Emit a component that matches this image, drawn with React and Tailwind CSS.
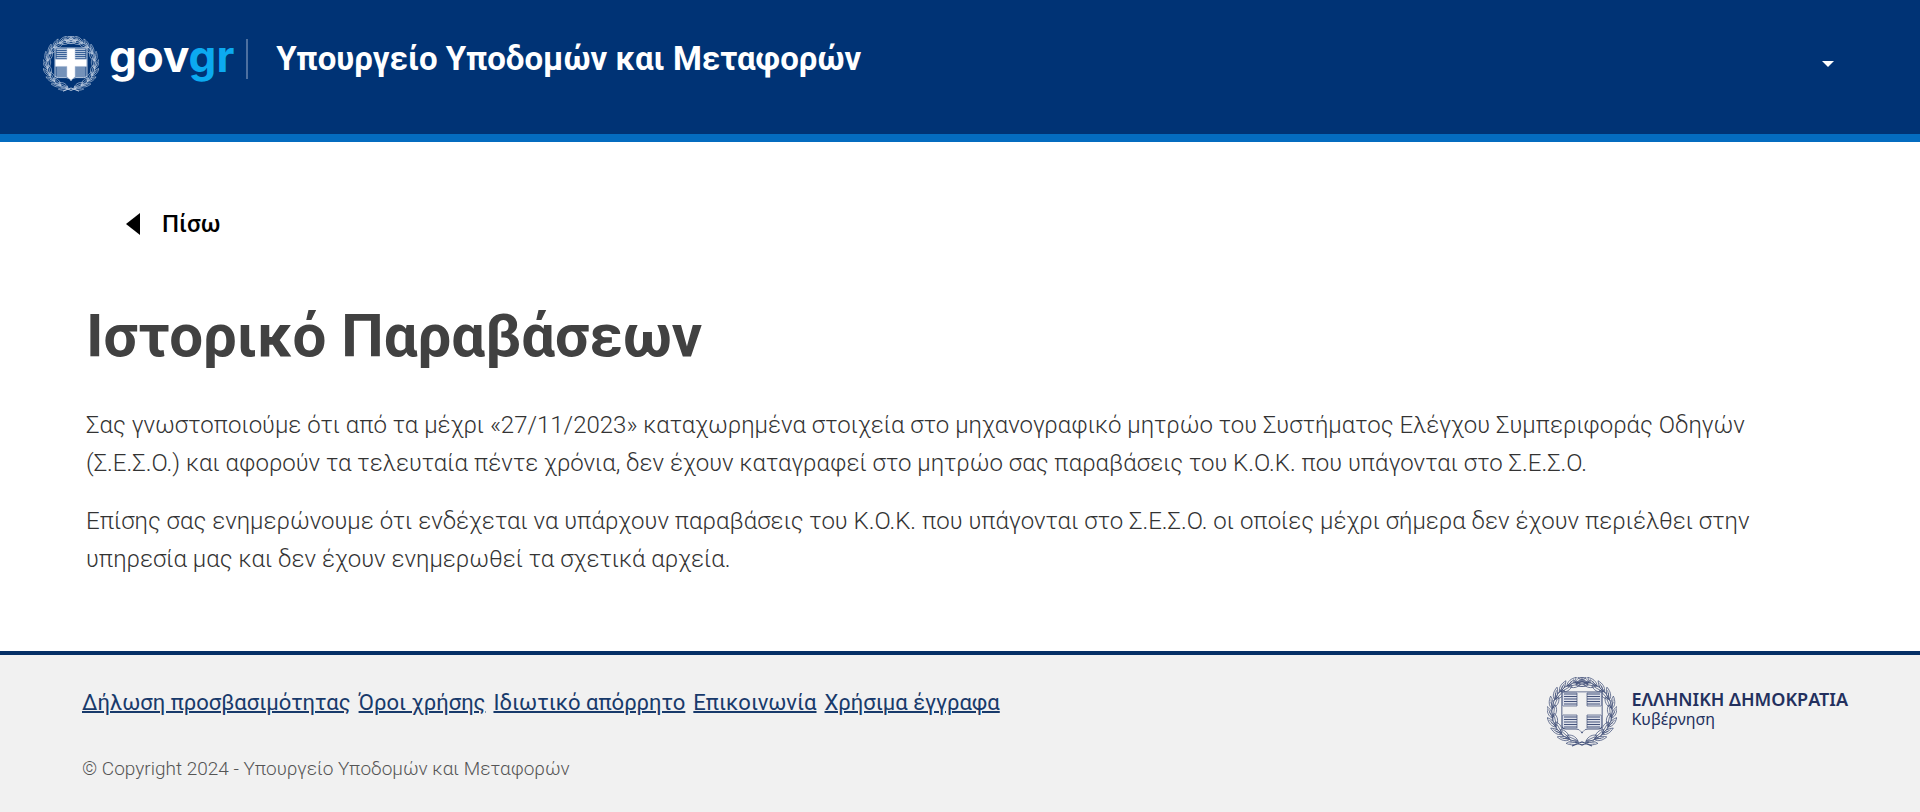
import React from "react";

const footerLinks = [
  "Δήλωση προσβασιμότητας",
  "Όροι χρήσης",
  "Ιδιωτικό απόρρητο",
  "Επικοινωνία",
  "Χρήσιμα έγγραφα",
];

const leafAngles = [12, 30, 48, 66, 84, 102, 120, 138, 156, 172];
const stripes = [17, 19.5, 22, 24.5, 27, 40, 42.5, 45, 47.5, 50];

// One half of the laurel wreath, from the bottom knot up to the top
const Branch = () => (
  <g>
    {leafAngles.map((angle) => (
      <g key={angle} transform={`rotate(${angle} 35 35)`}>
        <path d="M38 65 C34 64 30 65 26 69 C31 70 36 69 38 65Z" />
        <path d="M38 65 L29 68" />
        <path d="M37 64 C34 60 29 59 25 61 C28 65 33 66 37 64Z" />
        <path d="M37 64 L28 62" />
        <path d="M31 66 C28 63 26 64 22 65" />
      </g>
    ))}
  </g>
);

const Emblem = ({ className, cross, field }) => (
  <svg
    viewBox="0 0 70 70"
    className={className}
    fill="none"
    stroke="currentColor"
    strokeWidth="0.7"
    aria-hidden="true"
  >
    <Branch />
    <g transform="matrix(-1 0 0 1 70 0)">
      <Branch />
    </g>
    <path d="M25 69 L35 65 L45 69 M28 65 L35 68 L42 65" strokeWidth="1.2" />
    <path
      d="M15 15 H55 V49 Q55 52 51 52 H41 Q36 52 35 56 Q34 52 29 52 H19 Q15 52 15 49Z"
      fill={field}
      strokeWidth="1.2"
    />
    {stripes.map((y) => (
      <path key={y} d={`M17 ${y} H30 M40 ${y} H53`} strokeWidth="1.2" />
    ))}
    <path
      d="M30 15.5 H40 V29 H54.5 V38 H40 V51 L35 55 L30 51 V38 H15.5 V29 H30Z"
      fill={cross}
      stroke="none"
    />
    <path
      d="M30 16 V29 H16 M40 16 V29 H54 M16 38 H30 V51 M54 38 H40 V51"
      strokeWidth="0.7"
    />
  </svg>
);

const Header = () => (
  <header className="flex h-[142px] items-start justify-between border-b-8 border-[#046cc0] bg-[#003375] pl-[43px] pr-[86px] text-white">
    <div className="flex items-start">
      <a href="#" className="flex items-start gap-2.5 pt-9" aria-label="govgr">
        <Emblem className="size-14 text-[#c5d3e6]" cross="#ffffff" field="#2b5690" />
        <span className="font-['Inter',sans-serif] text-[44px] leading-10 font-bold">
          gov<span className="text-[#0caaf0]">gr</span>
        </span>
      </a>
      <div className="mt-[39px] ml-3 h-10 w-0.5 bg-[#4d70a0]" />
      <h2 className="mt-[39px] ml-7 text-[33px] leading-10 font-bold">
        Υπουργείο Υποδομών και Μεταφορών
      </h2>
    </div>
    <button type="button" className="mt-[61px]" aria-label="Μενού χρήστη">
      <svg viewBox="0 0 12 6" className="h-1.5 w-3" fill="currentColor">
        <path d="M0 0 H12 L6 6Z" />
      </svg>
    </button>
  </header>
);

const Footer = () => (
  <footer className="flex grow items-start justify-between border-t-4 border-[#052f66] bg-[#f1f1f1] pr-[72px] pb-7 pl-[82px]">
    <div className="pt-8">
      <nav className="flex flex-wrap gap-x-2 text-[22px] leading-8 text-[#183a6b]">
        {footerLinks.map((link) => (
          <a key={link} href="#" className="underline decoration-2">
            {link}
          </a>
        ))}
      </nav>
      <p className="mt-9 text-[19px] leading-7 font-light text-[#555555]">
        © Copyright 2024 - Υπουργείο Υποδομών και Μεταφορών
      </p>
    </div>
    <div className="flex gap-3.5 pt-[22px] font-['Noto_Sans',sans-serif] text-[#23305e]">
      <Emblem className="size-[70px] text-[#44527a]" cross="#f1f1f1" field="#dde0ea" />
      <div className="pt-3">
        <p className="text-lg leading-5 font-semibold">ΕΛΛΗΝΙΚΗ ΔΗΜΟΚΡΑΤΙΑ</p>
        <p className="text-base leading-5">Κυβέρνηση</p>
      </div>
    </div>
  </footer>
);

const App = () => {
  return (
    <div className="flex min-h-screen flex-col bg-white font-['Roboto',sans-serif]">
      <Header />
      <main className="px-[86px] pt-16 pb-[73px]">
        <button
          type="button"
          className="ml-10 flex items-center gap-[22px] text-2xl leading-9 font-medium text-black"
        >
          <svg viewBox="0 0 14 22" className="h-[22px] w-3.5" fill="currentColor">
            <path d="M14 0 V22 L0 11Z" />
          </svg>
          Πίσω
        </button>
        <h1 className="mt-[58px] text-[60px] leading-[72px] font-bold text-[#414141]">
          Ιστορικό Παραβάσεων
        </h1>
        <div className="mt-[34px] space-y-5 text-2xl leading-[38px] font-light text-[#333333]">
          <p>
            Σας γνωστοποιούμε ότι από τα μέχρι «27/11/2023» καταχωρημένα στοιχεία στο
            μηχανογραφικό μητρώο του Συστήματος Ελέγχου Συμπεριφοράς Οδηγών (Σ.Ε.Σ.Ο.) και
            αφορούν τα τελευταία πέντε χρόνια, δεν έχουν καταγραφεί στο μητρώο σας παραβάσεις
            του Κ.Ο.Κ. που υπάγονται στο Σ.Ε.Σ.Ο.
          </p>
          <p>
            Επίσης σας ενημερώνουμε ότι ενδέχεται να υπάρχουν παραβάσεις του Κ.Ο.Κ. που
            υπάγονται στο Σ.Ε.Σ.Ο. οι οποίες μέχρι σήμερα δεν έχουν περιέλθει στην υπηρεσία
            μας και δεν έχουν ενημερωθεί τα σχετικά αρχεία.
          </p>
        </div>
      </main>
      <Footer />
    </div>
  );
};

export default App;
